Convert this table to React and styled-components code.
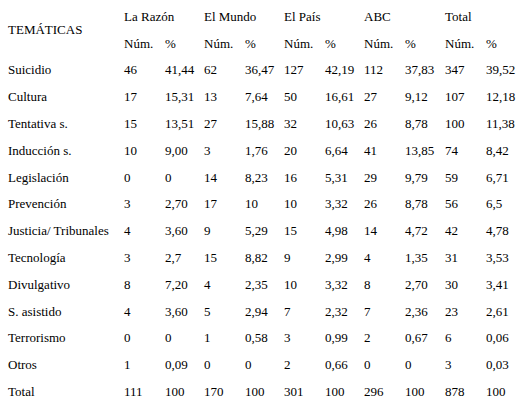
import React from 'react';
import styled, { createGlobalStyle } from 'styled-components';

const GlobalStyle = createGlobalStyle`
  html, body {
    margin: 0;
    padding: 0;
    background: #fff;
  }
`;

const Page = styled.div`
  width: 525px;
  height: 413px;
  box-sizing: border-box;
  padding: 3px 0 0 8px;
  background: #fff;
  color: #000;
  font-family: "Liberation Serif", "Times New Roman", serif;
  font-size: 13px;
  line-height: 15px;
`;

const Grid = styled.div`
  display: grid;
  grid-template-columns: 116px 41px 39px 41px 39px 41px 39px 41px 40px 41px 1fr;
  grid-auto-rows: 26.8px;
`;

const Cell = styled.div`
  display: flex;
  align-items: center;
  white-space: nowrap;
  grid-column: ${({ $span }) => ($span ? `span ${$span}` : 'auto')};
  grid-row: ${({ $rows }) => ($rows ? `span ${$rows}` : 'auto')};
`;

const papers = ['La Razón', 'El Mundo', 'El País', 'ABC', 'Total'];

const rows = [
  ['Suicidio', '46', '41,44', '62', '36,47', '127', '42,19', '112', '37,83', '347', '39,52'],
  ['Cultura', '17', '15,31', '13', '7,64', '50', '16,61', '27', '9,12', '107', '12,18'],
  ['Tentativa s.', '15', '13,51', '27', '15,88', '32', '10,63', '26', '8,78', '100', '11,38'],
  ['Inducción s.', '10', '9,00', '3', '1,76', '20', '6,64', '41', '13,85', '74', '8,42'],
  ['Legislación', '0', '0', '14', '8,23', '16', '5,31', '29', '9,79', '59', '6,71'],
  ['Prevención', '3', '2,70', '17', '10', '10', '3,32', '26', '8,78', '56', '6,5'],
  ['Justicia/ Tribunales', '4', '3,60', '9', '5,29', '15', '4,98', '14', '4,72', '42', '4,78'],
  ['Tecnología', '3', '2,7', '15', '8,82', '9', '2,99', '4', '1,35', '31', '3,53'],
  ['Divulgativo', '8', '7,20', '4', '2,35', '10', '3,32', '8', '2,70', '30', '3,41'],
  ['S. asistido', '4', '3,60', '5', '2,94', '7', '2,32', '7', '2,36', '23', '2,61'],
  ['Terrorismo', '0', '0', '1', '0,58', '3', '0,99', '2', '0,67', '6', '0,06'],
  ['Otros', '1', '0,09', '0', '0', '2', '0,66', '0', '0', '3', '0,03'],
  ['Total', '111', '100', '170', '100', '301', '100', '296', '100', '878', '100'],
];

export default function App() {
  return (
    <>
      <GlobalStyle />
      <Page>
        <Grid>
          <Cell $rows={2}>TEMÁTICAS</Cell>
          {papers.map((p) => (
            <Cell key={p} $span={2}>{p}</Cell>
          ))}
          {papers.map((p) => (
            <React.Fragment key={p}>
              <Cell>Núm.</Cell>
              <Cell>%</Cell>
            </React.Fragment>
          ))}
          {rows.map((row) =>
            row.map((val, i) => <Cell key={row[0] + i}>{val}</Cell>)
          )}
        </Grid>
      </Page>
    </>
  );
}
